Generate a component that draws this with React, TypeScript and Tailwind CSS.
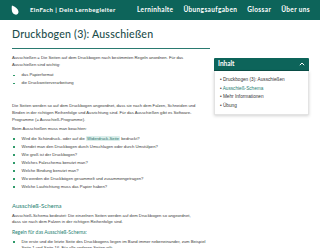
import React from "react";

function Bullet() {
  return <span className="mt-[2.5px] mr-[6px] inline-block h-[1.5px] w-[1.5px] shrink-0 bg-[#2f9a6a]" />;
}

function Li({ children }: { children: React.ReactNode }) {
  return (
    <li className="flex items-start pl-[1px]">
      <Bullet />
      <span className="ml-[1px]">{children}</span>
    </li>
  );
}

const heading = { fontFamily: 'Lato, "Open Sans", sans-serif' };

export default function App() {
  return (
    <div className="h-[248px] w-[320px] overflow-hidden bg-white" style={{ fontFamily: '"Liberation Sans", Arial, sans-serif' }}>
      <header className="flex h-[20px] items-center bg-[#0d645a] pl-[11px] pr-[10px] text-white" style={heading}>
        <svg width="8" height="10" viewBox="0 0 8 10" className="mr-[11px]">
          <path d="M1 0.5 C4 1.5 7.5 4 7.5 7 C7.5 8.8 6 9.8 4.3 9.6 C2.2 9.3 1 7.5 0.8 5 C0.6 3 0.7 1.5 1 0.5 Z" fill="white" />
        </svg>
        <span className="text-[6.1px] font-bold tracking-[0.35px]">EinFach | Dein Lernbegleiter</span>
        <nav className="ml-auto flex gap-[10px] text-[6.5px] font-bold tracking-[0.35px]">
          <span>Lerninhalte</span>
          <span>Übungsaufgaben</span>
          <span>Glossar</span>
          <span>Über uns</span>
        </nav>
      </header>
      <main className="flex gap-[3px] pl-[12px] pr-[11px]">
        <div className="w-[198px] shrink-0 text-[4.2px] leading-[6.5px] text-[#3a3a3a]">
          <h1 className="mt-[8px] border-b border-[#2a7a70] pb-[7px] text-[10.6px] font-medium leading-[13px] tracking-[0.2px] text-[#1d4e4b]" style={heading}>
            Druckbogen (3): Ausschießen
          </h1>
          <div className="w-[188px]">
            <p className="mt-[6px]">
              Ausschießen = Die Seiten auf dem Druckbogen nach bestimmten Regeln anordnen. Für das Ausschießen sind wichtig:
            </p>
            <ul className="mt-[4px] flex flex-col gap-[2px] leading-[6px]">
              <Li>das Papierformat</Li>
              <Li>die Druckweiterverarbeitung</Li>
            </ul>
            <p className="mt-[16px] leading-[7px]">
              Die Seiten werden so auf dem Druckbogen angeordnet, dass sie nach dem Falzen, Schneiden und Binden in der richtigen Reihenfolge und Ausrichtung sind. Für das Ausschießen gibt es Software-Programme (= Ausschieß-Programme).
            </p>
            <p className="mt-[3px]">Beim Ausschießen muss man beachten:</p>
            <ul className="mt-[3px] flex flex-col gap-[2px] leading-[6px]">
              <Li>
                Wird die Schöndruck- oder auf die{" "}
                <span className="rounded-[1px] bg-[#dcefec] px-[1px] text-[#1f6f66]">Widerdruck-Seite</span> bedruckt?
              </Li>
              <Li>Wendet man den Druckbogen durch Umschlagen oder durch Umstülpen?</Li>
              <Li>Wie groß ist der Druckbogen?</Li>
              <Li>Welches Falzschema benutzt man?</Li>
              <Li>Welche Bindung benutzt man?</Li>
              <Li>Wo werden die Druckbögen gesammelt und zusammengetragen?</Li>
              <Li>Welche Laufrichtung muss das Papier haben?</Li>
            </ul>
            <h2 className="mt-[12px] text-[6px] leading-[8px] text-[#1f7f73]" style={heading}>
              Ausschieß-Schema
            </h2>
            <p className="mt-[3px]">
              Ausschieß-Schema bedeutet: Die einzelnen Seiten werden auf dem Druckbogen so angeordnet, dass sie nach dem Falzen in der richtigen Reihenfolge sind.
            </p>
            <h3 className="mt-[3px] text-[5px] leading-[7px] text-[#1f7f73]" style={heading}>
              Regeln für das Ausschieß-Schema:
            </h3>
          </div>
          <ul className="mt-[3px] flex flex-col gap-[2px] leading-[6px]">
            <Li>
              Die erste und die letzte Seite des Druckbogens liegen im Band immer nebeneinander, zum Beispiel Seite 1 und Seite 16. Für alle anderen Seiten gilt:
            </Li>
          </ul>
        </div>
        <aside className="ml-[1px] mt-[38px] w-[96px] self-start">
          <div className="flex h-[13px] items-center justify-between rounded-t-[1px] border-b border-[#0a4f47] bg-[#0d645a] px-[4px] text-white" style={heading}>
            <span className="text-[6.5px] font-bold">Inhalt</span>
            <svg width="6" height="4" viewBox="0 0 6 4">
              <path d="M0.8 3.2 L3 1 L5.2 3.2" stroke="white" strokeWidth="1" fill="none" />
            </svg>
          </div>
          <div className="border-x border-b border-[#e3e3e3] px-[5px] pb-[4px] pt-[5px] text-[4.7px] leading-[8.5px] text-[#333] shadow-[0_1px_3px_rgba(0,0,0,0.18)]">
            <div>• Druckbogen (3): Ausschießen</div>
            <div>• <span className="text-[#1f7f73]">Ausschieß-Schema</span></div>
            <div>• Mehr Informationen</div>
            <div>• Übung</div>
          </div>
        </aside>
      </main>
    </div>
  );
}
